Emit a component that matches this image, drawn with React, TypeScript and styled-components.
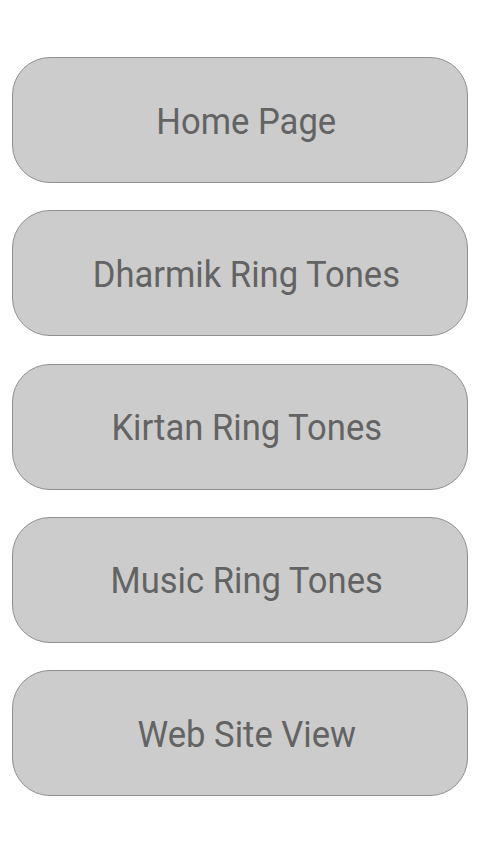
import React from "react";
import styled, { createGlobalStyle } from "styled-components";

const Global = createGlobalStyle`
  html, body { margin: 0; padding: 0; background: #ffffff; }
  body { font-family: Roboto, "Liberation Sans", sans-serif; }
`;

const Page = styled.div`
  display: flex;
  flex-direction: column;
  gap: 27.3px;
  padding: 57px 12px 0 12px;
`;

const MenuButton = styled.button`
  box-sizing: border-box;
  height: 126px;
  width: 100%;
  display: flex;
  align-items: center;
  justify-content: center;
  padding: 2px 0 0 13px;
  background: #cccccc;
  border: 1px solid #8f8f8f;
  border-radius: 38px;
  cursor: pointer;
`;

const Label = styled.span`
  display: inline-block;
  font-family: Roboto, "Liberation Sans", sans-serif;
  font-size: 37px;
  font-weight: 400;
  color: #636363;
  white-space: nowrap;
  transform: scaleX(0.935);
`;

const items = [
  "Home Page",
  "Dharmik Ring Tones",
  "Kirtan Ring Tones",
  "Music Ring Tones",
  "Web Site View",
];

export default function App() {
  return (
    <>
      <Global />
      <Page>
        {items.map((t) => (
          <MenuButton key={t}>
            <Label>{t}</Label>
          </MenuButton>
        ))}
      </Page>
    </>
  );
}
